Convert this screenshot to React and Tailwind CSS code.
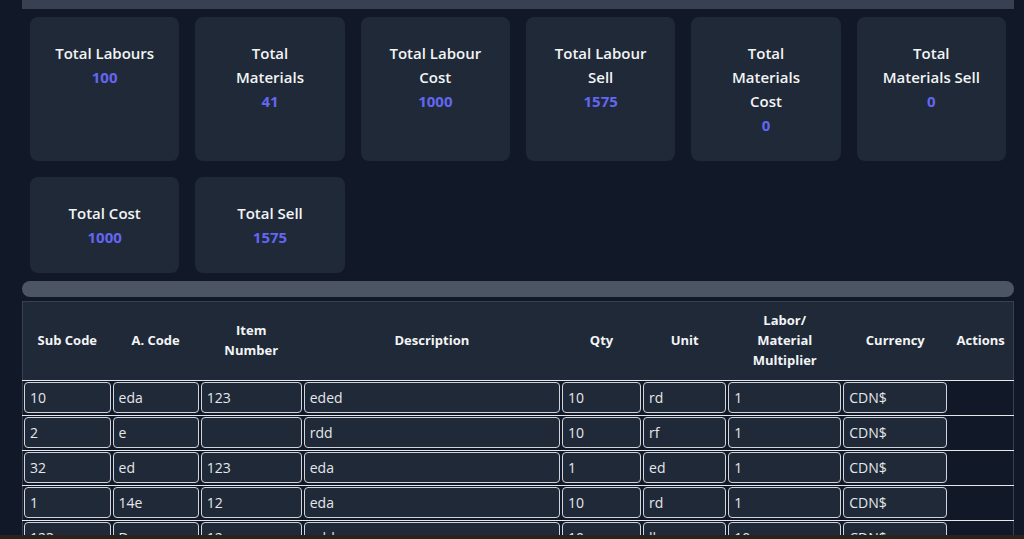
import React from "react";

const cards = [
  { title: "Total Labours", value: "100" },
  { title: "Total Materials", value: "41" },
  { title: "Total Labour Cost", value: "1000" },
  { title: "Total Labour Sell", value: "1575" },
  { title: "Total Materials Cost", value: "0" },
  { title: "Total Materials Sell", value: "0" },
  { title: "Total Cost", value: "1000" },
  { title: "Total Sell", value: "1575" },
];

const rows = [
  ["10", "eda", "123", "eded", "10", "rd", "1", "CDN$"],
  ["2", "e", "", "rdd", "10", "rf", "1", "CDN$"],
  ["32", "ed", "123", "eda", "1", "ed", "1", "CDN$"],
  ["1", "14e", "12", "eda", "10", "rd", "1", "CDN$"],
  ["123", "D", "12", "edd", "10", "lb", "10", "CDN$"],
];

const font = { fontFamily: '"Open Sans", "Noto Sans", sans-serif' };

export default function App() {
  return (
    <div className="min-h-screen bg-[#111827] pl-[22px] pr-[10px]" style={font}>
      <div className="h-[9px] bg-[#374151]" />
      <div className="grid grid-cols-6 gap-4 px-2 pt-2">
        {cards.map((c) => (
          <div
            key={c.title}
            className="flex flex-col items-center rounded-lg bg-[#1f2937] p-6 text-center"
          >
            <div className="text-[15px] font-semibold leading-6 text-gray-100">{c.title}</div>
            <div className="text-[15px] font-bold leading-6 text-[#6366f1]">{c.value}</div>
          </div>
        ))}
      </div>
      <div className="mt-2 h-4 rounded-full bg-[#4b5563]" />
      <table className="mt-1 w-full table-fixed border-collapse border border-[#374151]">
        <colgroup>
          <col className="w-[89px]" />
          <col className="w-[88px]" />
          <col className="w-[103px]" />
          <col className="w-[258px]" />
          <col className="w-[81px]" />
          <col className="w-[85px]" />
          <col className="w-[115px]" />
          <col className="w-[106px]" />
          <col className="w-[65px]" />
        </colgroup>
        <thead>
          <tr className="bg-[#1f2937] text-[13px] font-bold leading-5 text-gray-100">
            <th className="pb-[10px] pt-[8px]">Sub Code</th>
            <th className="pb-[10px] pt-[8px]">A. Code</th>
            <th className="px-6 pb-[10px] pt-[8px]">Item Number</th>
            <th className="pb-[10px] pt-[8px]">Description</th>
            <th className="pb-[10px] pt-[8px]">Qty</th>
            <th className="pb-[10px] pt-[8px]">Unit</th>
            <th className="px-3 pb-[10px] pt-[8px]">Labor/ Material Multiplier</th>
            <th className="pb-[10px] pt-[8px]">Currency</th>
            <th className="pb-[10px] pt-[8px]">Actions</th>
          </tr>
        </thead>
        <tbody>
          {rows.map((r, i) => (
            <tr key={i} className="border-t border-[#e5e7eb] bg-[#111827]">
              {r.map((v, j) => (
                <td key={j} className="px-[1px] pb-[2px] pt-[1px]">
                  <input
                    readOnly
                    value={v}
                    className="block h-[31px] w-full rounded border border-[#d1d5db] bg-[#1f2937] px-[5px] text-[14px] text-gray-200 outline-none"
                    style={font}
                  />
                </td>
              ))}
              <td />
            </tr>
          ))}
        </tbody>
      </table>
      <div className="h-10" />
      <div className="fixed bottom-0 left-0 h-[4px] w-full bg-[#2b221d]" />
    </div>
  );
}
